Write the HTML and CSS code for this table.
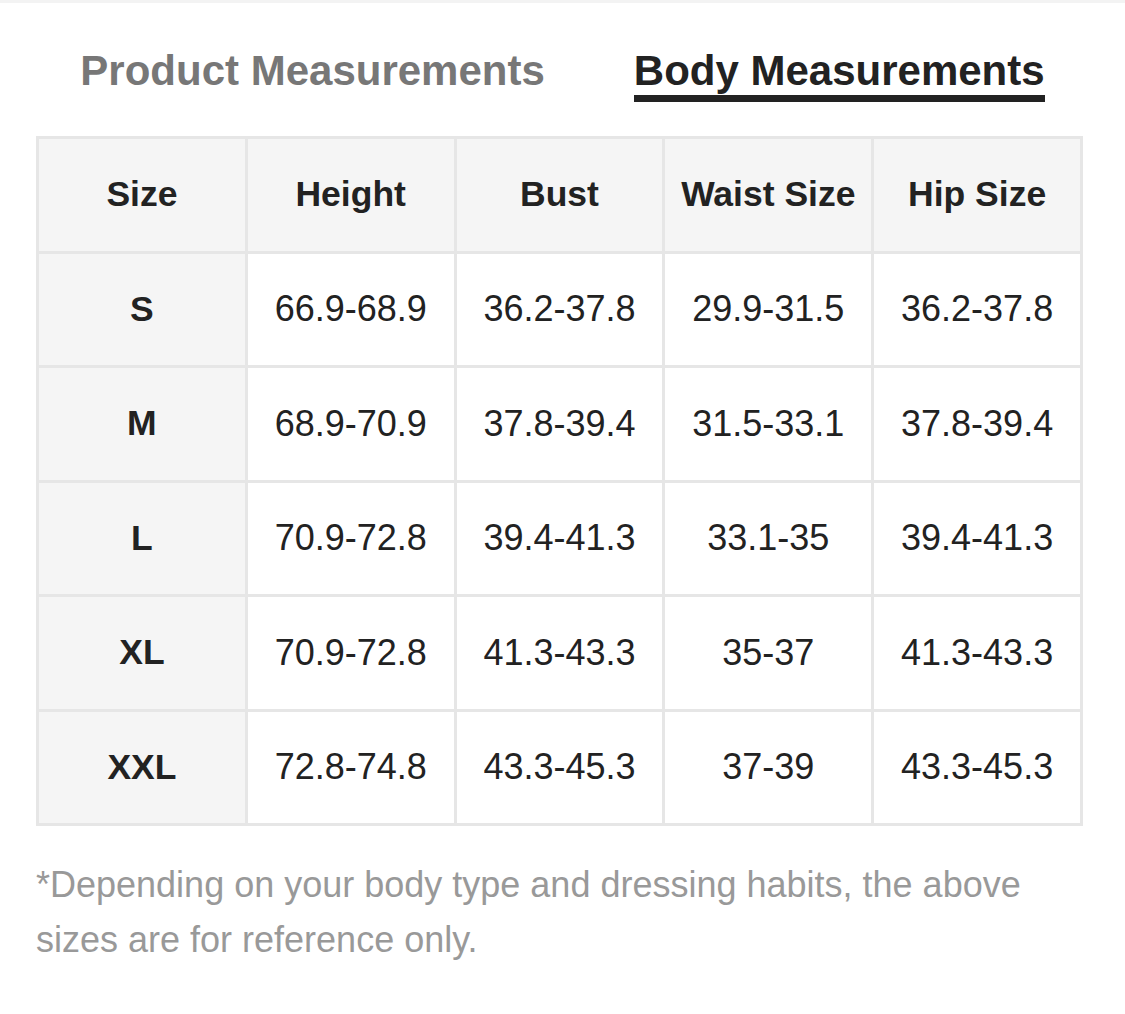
FILE: index.html
```html
<!DOCTYPE html>
<html>
<head>
<meta charset="utf-8">
<link rel="stylesheet" href="styles.css">
</head>
<body>
<div class="topbar"></div>
<div class="page">
  <div class="tabs">
    <div class="tab">Product Measurements</div>
    <div class="tab active">Body Measurements</div>
  </div>
  <table class="size-table">
    <thead>
      <tr><th>Size</th><th>Height</th><th>Bust</th><th>Waist Size</th><th>Hip Size</th></tr>
    </thead>
    <tbody>
      <tr><th>S</th><td>66.9-68.9</td><td>36.2-37.8</td><td>29.9-31.5</td><td>36.2-37.8</td></tr>
      <tr><th>M</th><td>68.9-70.9</td><td>37.8-39.4</td><td>31.5-33.1</td><td>37.8-39.4</td></tr>
      <tr><th>L</th><td>70.9-72.8</td><td>39.4-41.3</td><td>33.1-35</td><td>39.4-41.3</td></tr>
      <tr><th>XL</th><td>70.9-72.8</td><td>41.3-43.3</td><td>35-37</td><td>41.3-43.3</td></tr>
      <tr><th>XXL</th><td>72.8-74.8</td><td>43.3-45.3</td><td>37-39</td><td>43.3-45.3</td></tr>
    </tbody>
  </table>
  <p class="note">*Depending on your body type and dressing habits, the above sizes are for reference only.</p>
</div>
</body>
</html>
```
FILE: styles.css
```css
html, body {
  margin: 0;
  padding: 0;
  background: #ffffff;
  font-family: "Liberation Sans", Arial, sans-serif;
}
.topbar {
  height: 3px;
  background: #f3f3f3;
}
.page {
  width: 1047px;
  margin-left: 36px;
}
.tabs {
  display: flex;
  justify-content: center;
  gap: 89px;
  padding-top: 44px;
  padding-left: 6px;
}
.tab {
  font-size: 42px;
  font-weight: bold;
  color: #777777;
  line-height: 48px;
  border-bottom: 7px solid transparent;
}
.tab.active {
  color: #222222;
  border-bottom-color: #222222;
}
.size-table {
  margin-top: 34px;
  width: 1047px;
  border-collapse: collapse;
  table-layout: fixed;
  border: 3px solid #e6e6e6;
}
.size-table th,
.size-table td {
  border: 3px solid #e6e6e6;
  height: 111.5px;
  padding: 0;
  text-align: center;
  font-size: 35.5px;
  color: #222222;
}
.size-table th {
  background: #f5f5f5;
  font-weight: bold;
}
.size-table td {
  font-size: 36px;
  background: #ffffff;
}
.note {
  margin: 31px 0 0;
  font-size: 36px;
  line-height: 55px;
  color: #999999;
}
```
